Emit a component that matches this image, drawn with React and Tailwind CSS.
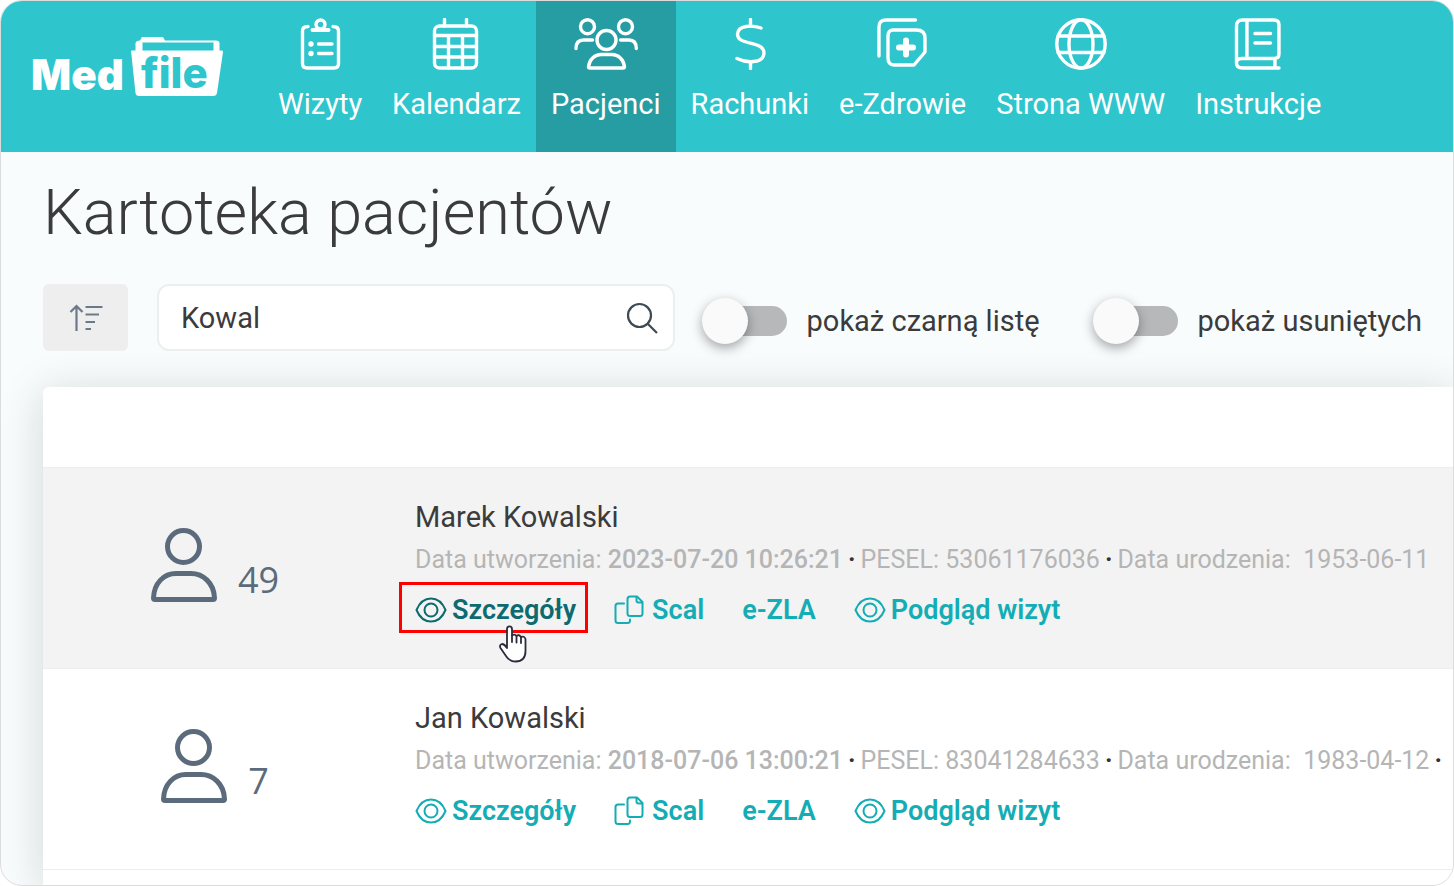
import { useState } from 'react'
import clsx from 'clsx'

const NAV_ITEMS = [
    { label: 'Wizyty', icon: VisitsIcon },
    { label: 'Kalendarz', icon: CalendarIcon },
    { label: 'Pacjenci', icon: PatientsIcon, active: true },
    { label: 'Rachunki', icon: DollarIcon },
    { label: 'e-Zdrowie', icon: HealthIcon },
    { label: 'Strona WWW', icon: GlobeIcon },
    { label: 'Instrukcje', icon: BookIcon },
]

const PATIENTS = [
    {
        id: 1,
        count: 49,
        name: 'Marek Kowalski',
        created: '2023-07-20 10:26:21',
        pesel: '53061176036',
        born: '1953-06-11',
        hovered: true,
    },
    {
        id: 2,
        count: 7,
        name: 'Jan Kowalski',
        created: '2018-07-06 13:00:21',
        pesel: '83041284633',
        born: '1983-04-12',
        more: true,
    },
]

function NavSvg({ children }) {
    return (
        <svg
            viewBox="0 0 64 52"
            className="h-[52px] w-16"
            fill="none"
            stroke="currentColor"
            strokeWidth="3.400"
            strokeLinecap="round"
            strokeLinejoin="round"
            aria-hidden="true"
        >
            {children}
        </svg>
    )
}

function VisitsIcon() {
    return (
        <NavSvg>
            <path d="M20 8.500Q14.500 8.500 14.500 13V45.500Q14.500 50 19 50H46Q50.500 50 50.500 45.500V13Q50.500 8.500 45 8.500" />
            <path d="M24.500 12H40.500" strokeWidth="4" />
            <circle cx="32.500" cy="6.500" r="4.500" />
            <path d="M30.500 26H44M30.500 35.500H44" />
            <circle cx="23" cy="26" r="2.700" fill="currentColor" stroke="none" />
            <circle cx="23" cy="35.500" r="2.700" fill="currentColor" stroke="none" />
        </NavSvg>
    )
}

function CalendarIcon() {
    return (
        <NavSvg>
            <rect x="10.500" y="8" width="42" height="42" rx="5" />
            <path d="M20.500 1.500V8M42.500 1.500V8M10.500 17.500H52.500M10.500 28.500H52.500M10.500 39H52.500M24.500 17.500V50M38.500 17.500V50" />
        </NavSvg>
    )
}

function PatientsIcon() {
    return (
        <NavSvg>
            <circle cx="13.500" cy="8.700" r="7" />
            <circle cx="51.500" cy="8.700" r="7" />
            <circle cx="32.500" cy="22" r="9.500" />
            <path d="M2 30.500Q2 22 9.500 22H18.500M62.300 30.500Q62.300 22 55 22H46.500" />
            <path d="M14.500 48.500C15.500 41 21 36.500 27 36.500H38C44 36.500 49.500 41 50.500 48.500Q50.500 50 49 50H16Q14.500 50 14.500 48.500Z" />
        </NavSvg>
    )
}

function DollarIcon() {
    return (
        <NavSvg>
            <path d="M32.500 1.500V8M32.500 44V50.500" />
            <path d="M43 10C34 7 20 7 19.500 16C19 28 46 22 46 35C45.500 46 28 45 19 40.500" />
        </NavSvg>
    )
}

function HealthIcon() {
    return (
        <NavSvg>
            <path d="M44.500 2H15Q8 2 8 9V38" />
            <path d="M22 12H45.500Q54 12 54 20V34L43 47H23Q17 47 17 40V18Q17 12 22 12Z" />
            <path d="M35 22.500V36.500M28 29.500H42" strokeWidth="6" />
        </NavSvg>
    )
}

function GlobeIcon() {
    return (
        <NavSvg>
            <circle cx="32" cy="26" r="24.200" />
            <ellipse cx="32" cy="26" rx="12" ry="24.200" />
            <path d="M9 18H55M9 34.500H55" />
        </NavSvg>
    )
}

function BookIcon() {
    return (
        <NavSvg>
            <path d="M10.500 45V8Q10.500 2 16.500 2H48Q53 2 53 7V36Q53 40.500 48 40.500H15.500Q10.500 40.500 10.500 45Q10.500 50 16.500 50H53M49 40.500V50M21 2V40.500" />
            <path d="M29 15.500H44.500M29 25H44.500" strokeWidth="3.500" />
        </NavSvg>
    )
}

function PersonIcon() {
    return (
        <svg viewBox="0 0 66 76" className="h-[76px] w-[66px]" fill="none" stroke="currentColor" strokeWidth="5" strokeLinejoin="round" aria-hidden="true">
            <circle cx="32.500" cy="19.500" r="16" />
            <path d="M2.500 71C3 56 13 46.500 25 46.500H40C52 46.500 63 56 63.500 71Q63.500 72.500 62 72.500H4Q2.500 72.500 2.500 71Z" />
        </svg>
    )
}

function EyeIcon() {
    return (
        <svg viewBox="0 0 32 26" className="h-[26px] w-8" fill="none" stroke="currentColor" strokeWidth="2" strokeLinejoin="round" aria-hidden="true">
            <path d="M1.500 13C4 7 9 1.500 16 1.500S28 7 30.500 13C28 19 23 24.500 16 24.500S4 19 1.500 13Z" />
            <circle cx="16" cy="13" r="6.500" />
        </svg>
    )
}

function MergeIcon() {
    return (
        <svg viewBox="0 0 30 30" className="h-[30px] w-[30px]" fill="none" stroke="currentColor" strokeWidth="2" strokeLinecap="round" strokeLinejoin="round" aria-hidden="true">
            <path d="M13.500 4Q13.500 1.500 16 1.500H23L28.500 7V18.500Q28.500 21 26 21H16Q13.500 21 13.500 18.500Z" />
            <path d="M22.500 2V5.500Q22.500 7.500 24.500 7.500H28" />
            <path d="M10 8.500H4Q1.500 8.500 1.500 11V25.500Q1.500 28 4 28H13.500Q16 28 16 25.500V24.500" />
        </svg>
    )
}

function SortIcon() {
    return (
        <svg viewBox="0 0 34 28" className="h-7 w-[34px]" fill="none" stroke="currentColor" strokeWidth="2.200" aria-hidden="true">
            <path d="M7.500 27V2M1.500 8L7.500 2L13.500 8M16.500 3H33.500M16.500 10.500H30M16.500 18H26M16.500 25H22" />
        </svg>
    )
}

function HandCursor() {
    return (
        <svg viewBox="0 0 28 38" className="h-[38px] w-7" fill="white" stroke="#2b2b3c" strokeWidth="1.800" strokeLinejoin="round" strokeLinecap="round" aria-hidden="true">
            <path d="M8 23V4Q8 1.300 10.500 1.300Q13 1.300 13 4V10.500Q15.500 8.500 17.500 11Q20 9 22 12Q25 10.500 26.500 14V26Q26.500 36.500 16.500 36.500Q10.500 36.500 7 31L1.500 23Q0 20 3 19Q5.500 19 8 23Z" />
            <path d="M13 10.500V17M17.500 11V17.500M22 12V18" fill="none" />
        </svg>
    )
}

function Logo() {
    return (
        <a href="#" aria-label="MedFile">
            <svg viewBox="0 0 192 60" className="h-[60px] w-48 overflow-visible">
                <path
                    d="M99 14L103.500 56Q104 59 107 59H181Q184.500 59 185 56L191 15Q191 13.500 190 13.500H187.500V6Q187.500 3.500 184 3.500H133L131 0H110L108 3.500Q104 3.500 103.500 6V13.500H100Q99 13.500 99 14ZM110.500 5.500H181.500V13.500H110.500Z"
                    fill="white"
                    fillRule="evenodd"
                />
                <text x="-1" y="53" fill="white" className="font-[Inter] text-[42px] font-black">Med</text>
                <text x="109" y="51" fill="#2fc5cd" className="font-[Inter] text-[42px] font-extrabold [font-variant-ligatures:none]">file</text>
            </svg>
        </a>
    )
}

function Header() {
    return (
        <header className="flex h-[151px] items-start bg-[#2fc5cd] pl-[31px] text-white">
            <div className="mr-[39px] pt-9">
                <Logo />
            </div>
            <nav className="flex self-stretch">
                {NAV_ITEMS.map(({ label, icon: Icon, active }) => (
                    <a
                        key={label}
                        href="#"
                        aria-current={active ? 'page' : undefined}
                        className={clsx(
                            'flex flex-col items-center gap-4 px-[15px] pt-[17px] text-[29px] leading-9 whitespace-nowrap',
                            active && 'bg-[#269ca3]'
                        )}
                    >
                        <Icon />
                        <span>{label}</span>
                    </a>
                ))}
            </nav>
        </header>
    )
}

function Toggle({ label }) {
    const [checked, setChecked] = useState(false)

    return (
        <label className="flex cursor-pointer items-center gap-5 pt-1.5 text-[29px] leading-9 whitespace-nowrap">
            <input
                type="checkbox"
                role="switch"
                checked={checked}
                onChange={(e) => setChecked(e.target.checked)}
                className="relative h-[30px] w-20 shrink-0 cursor-pointer appearance-none rounded-full bg-[#b7b8ba] before:absolute before:-top-2 before:-left-[5px] before:size-[46px] before:rounded-full before:bg-[#fafafa] before:shadow-[0_4px_12px_rgba(0,0,0,0.35)] before:transition-transform checked:bg-[#93dfe3] checked:before:translate-x-11"
            />
            {label}
        </label>
    )
}

function Dot() {
    return <span className="mx-[5px] font-bold text-[#333]">·</span>
}

function PatientRow({ patient }) {
    return (
        <li className={clsx('flex border-t border-[#ededed]', patient.hovered && 'bg-[#f3f3f3]')}>
            <div className="flex w-[344px] shrink-0 items-end justify-center gap-[21px] pb-[65px] text-[#5b6b7b]">
                <PersonIcon />
                <span className="font-['Open_Sans'] text-[36px] leading-[46px]">{patient.count}</span>
            </div>
            <div className="min-w-0 flex-1 overflow-hidden pt-[31px] pb-10 pl-7">
                <h2 className="text-[29px] leading-9">{patient.name}</h2>
                <p className="mt-2 text-[25px] leading-[34px] whitespace-nowrap text-[#b5b5b5]">
                    Data utworzenia: <b className="font-medium">{patient.created}</b>
                    <Dot />
                    PESEL: {patient.pesel}
                    <Dot />
                    Data urodzenia: &nbsp;{patient.born}
                    {patient.more && <Dot />}
                </p>
                <div className="mt-[15px] flex gap-[38px] text-[27px] leading-9 font-semibold whitespace-nowrap text-[#14adb5]">
                    <a href="#" className={clsx('relative flex items-center gap-[5px]', patient.hovered && 'text-[#0d6b70]')}>
                        <EyeIcon />
                        Szczegóły
                        {patient.hovered && (
                            <>
                                <span className="absolute -top-2.5 -right-3 -bottom-[5px] -left-4 border-3 border-[#fe0000]" />
                                <span className="absolute top-[33px] left-[84px]">
                                    <HandCursor />
                                </span>
                            </>
                        )}
                    </a>
                    <a href="#" className="flex items-center gap-2">
                        <MergeIcon />
                        Scal
                    </a>
                    <a href="#">e-ZLA</a>
                    <a href="#" className="flex items-center gap-[5px]">
                        <EyeIcon />
                        Podgląd wizyt
                    </a>
                </div>
            </div>
        </li>
    )
}

export default function App() {
    const [query, setQuery] = useState('Kowal')

    return (
        <div className="flex min-h-screen flex-col overflow-hidden rounded-[22px] border border-[#dcdcdc] bg-[#f8fcfd] font-[Roboto,sans-serif] text-[#3b3b3b]">
            <Header />
            <main className="flex flex-1 flex-col pt-[25px] pl-[42px]">
                <h1 className="text-[63px] leading-[72px] font-light">Kartoteka pacjentów</h1>

                <div className="mt-[35px] flex pr-[31px]">
                    <button type="button" aria-label="Sortuj" className="flex h-[67px] w-[85px] shrink-0 items-center justify-center rounded-md bg-[#eeeeee] text-[#6b7a8a]">
                        <SortIcon />
                    </button>
                    <div className="relative mr-8 ml-[29px] min-w-0 flex-1">
                        <input
                            type="text"
                            aria-label="Szukaj pacjenta"
                            value={query}
                            onChange={(e) => setQuery(e.target.value)}
                            className="h-[67px] w-full rounded-xl border-2 border-[#eceff0] bg-white pr-16 pl-[22px] text-[29px] outline-none"
                        />
                        <button type="button" aria-label="Szukaj" className="absolute top-[18px] right-[17px] text-[#3f4a55]">
                            <svg viewBox="0 0 32 32" className="size-8" fill="none" stroke="currentColor" strokeWidth="2.200" aria-hidden="true">
                                <circle cx="13.500" cy="13.500" r="11.500" />
                                <path d="M22 22L31 31" />
                            </svg>
                        </button>
                    </div>
                    <div className="flex gap-[58px]">
                        <Toggle label="pokaż czarną listę" />
                        <Toggle label="pokaż usuniętych" />
                    </div>
                </div>

                <section className="mt-9 flex-1 rounded-tl-md bg-white pt-20 shadow-[0_6px_44px_rgba(0,20,20,0.16)]">
                    <ul className="border-b border-[#ededed]">
                        {PATIENTS.map((patient) => (
                            <PatientRow key={patient.id} patient={patient} />
                        ))}
                    </ul>
                </section>
            </main>
        </div>
    )
}
